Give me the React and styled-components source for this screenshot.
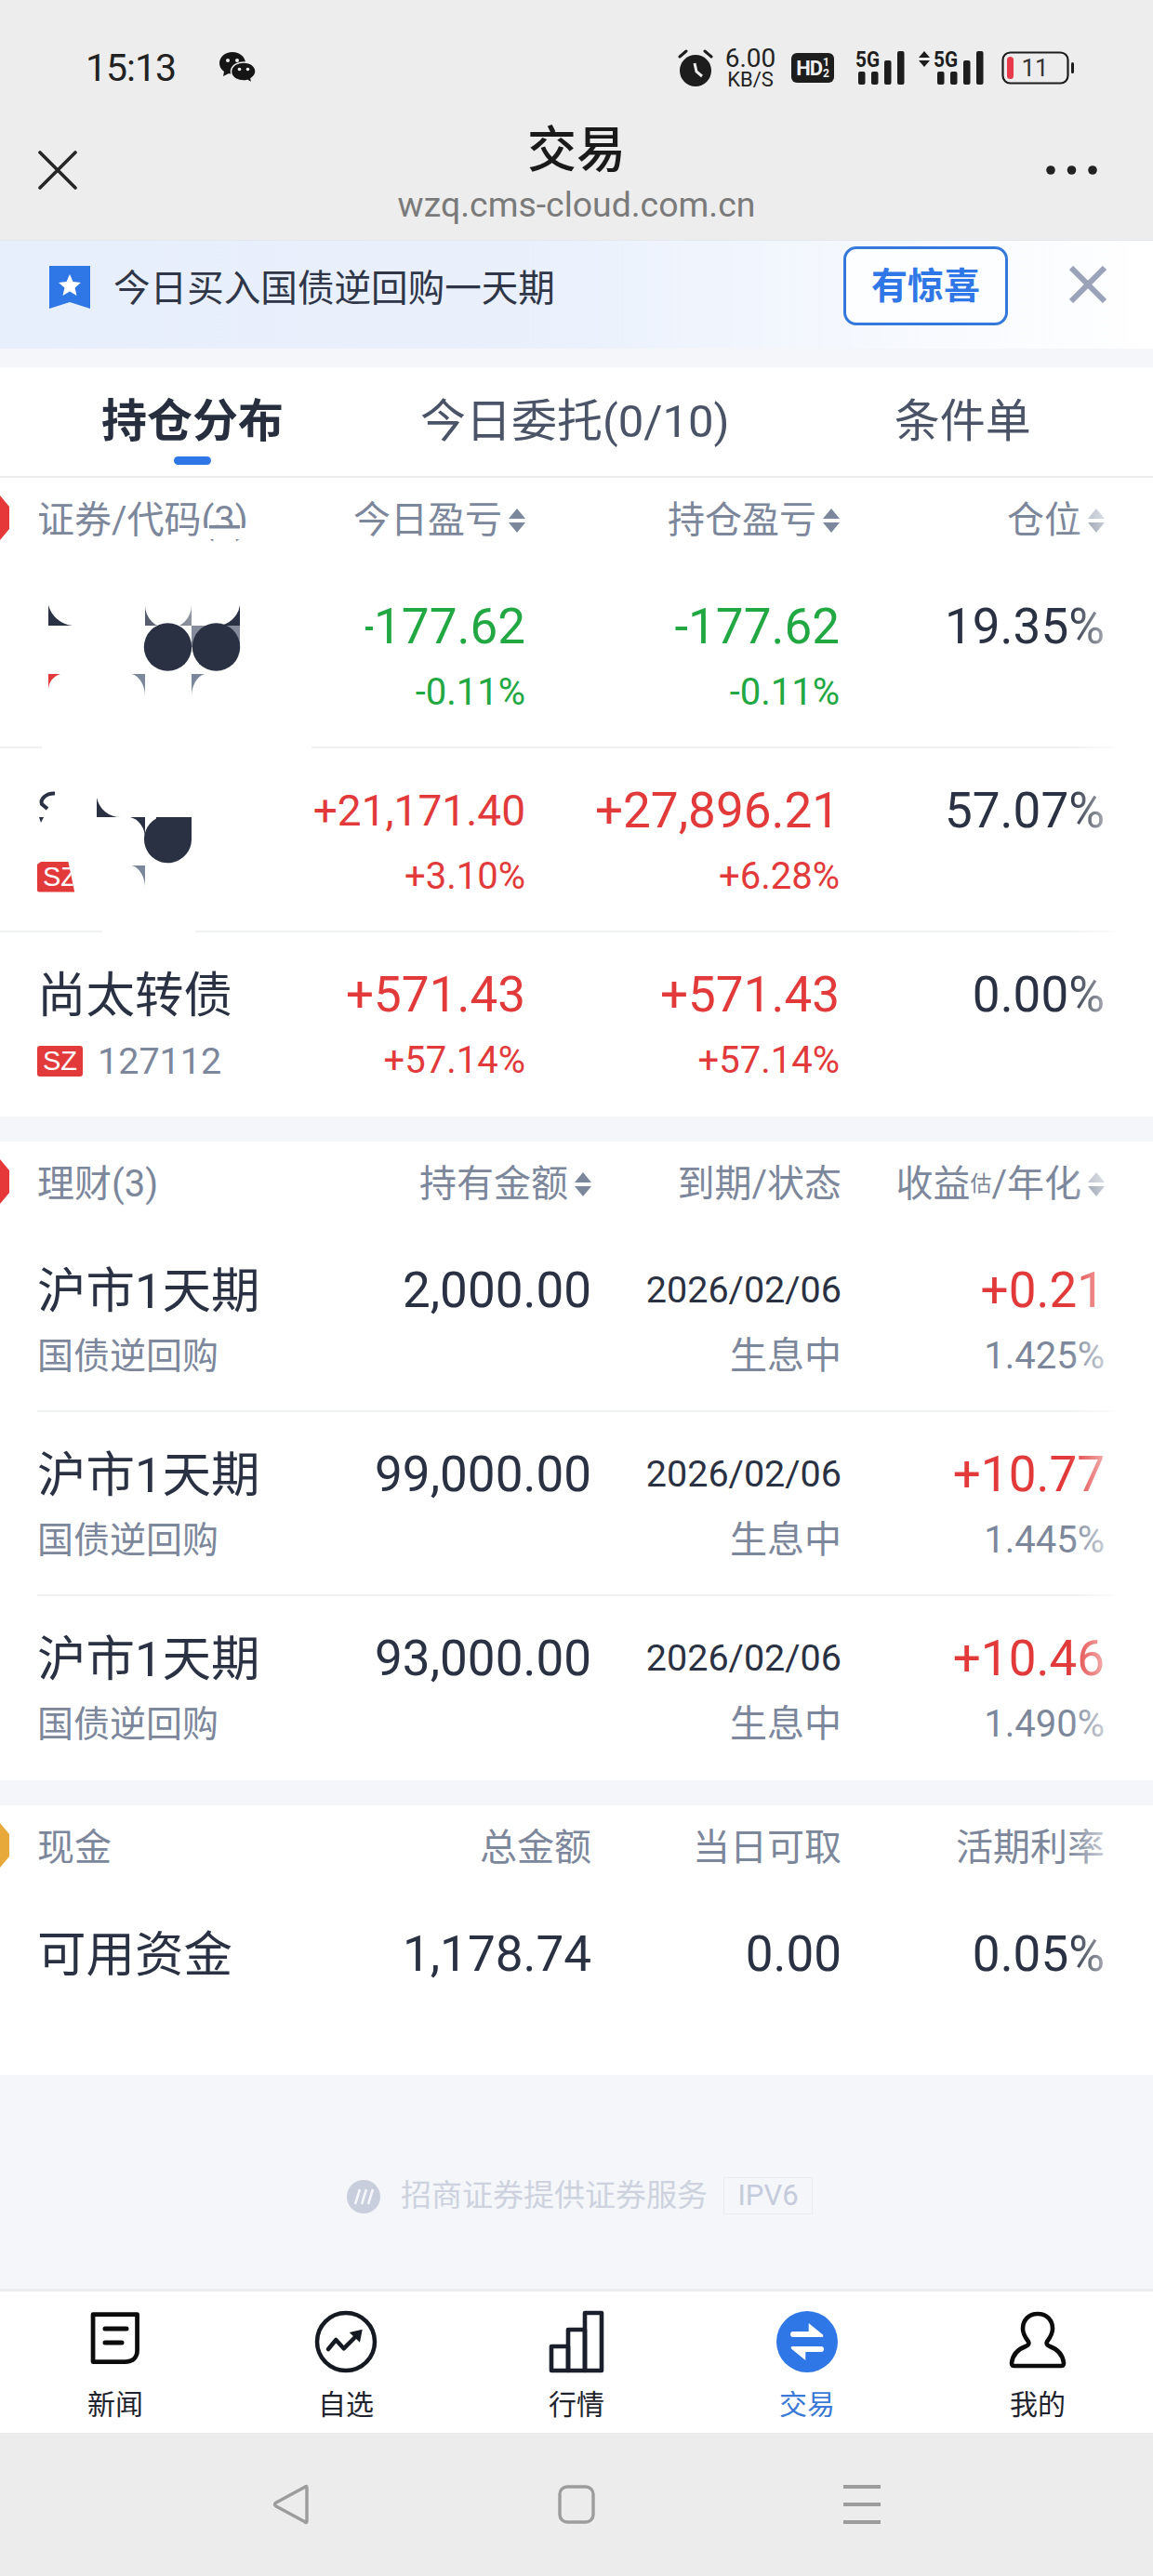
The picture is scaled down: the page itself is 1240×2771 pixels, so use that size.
import React from "react";
import styled, { createGlobalStyle } from "styled-components";

const Global = createGlobalStyle`
  html, body { margin: 0; padding: 0; background: #f4f6fa; }
  body { font-family: Roboto, "Noto Sans CJK SC", sans-serif; }
  * { box-sizing: border-box; }
`;

const INK = "#2a3142";
const MUTED = "#7c879b";
const RED = "#e23a3a";
const GREEN = "#22a843";
const BLUE = "#2f77e6";

const Page = styled.div`
  width: 1240px;
  height: 2771px;
  display: flex;
  flex-direction: column;
  overflow: hidden;
  background: #f4f6fa;
`;
const TopBar = styled.header`
  height: 258px;
  background: #ededed;
  flex: none;
`;
const StatusBar = styled.div`
  height: 98px;
  padding: 48px 85px 0 92px;
  display: flex;
  align-items: center;
  justify-content: space-between;
`;
const StatusLeft = styled.div`
  display: flex;
  align-items: center;
  gap: 46px;
`;
const Clock = styled.span`
  font-size: 41px;
  line-height: 50px;
  color: #222;
  letter-spacing: -1px;
`;
const StatusRight = styled.div`
  display: flex;
  align-items: center;
`;
const StatusIcon = styled.svg`
  display: block;
  flex: none;
  margin-left: ${(p) => p.$gap || 0}px;
`;
const NetSpeed = styled.div`
  width: 58px;
  margin-left: 11px;
  display: flex;
  flex-direction: column;
  align-items: center;
  color: #222;
`;
const SpeedValue = styled.span`
  font-size: 28px;
  line-height: 25px;
`;
const SpeedUnit = styled.span`
  font-size: 22px;
  line-height: 21px;
`;
const HdBadge = styled.div`
  width: 46px;
  height: 32px;
  margin-left: 15px;
  background: #1d1d1d;
  border-radius: 6px;
  color: #f0f0f0;
  display: flex;
  align-items: center;
  justify-content: center;
  font-size: 22px;
  font-weight: 700;
  letter-spacing: -1px;
`;
const HdFraction = styled.span`
  display: flex;
  flex-direction: column;
  font-size: 12px;
  line-height: 12px;
  margin-left: 1px;
  letter-spacing: 0;
`;
const NavHeader = styled.div`
  height: 160px;
  padding: 0 60px 0 41px;
  display: grid;
  grid-template-columns: 100px 1fr 81px;
  align-items: center;
`;
const TitleBlock = styled.div`
  display: flex;
  flex-direction: column;
  align-items: center;
  padding-top: 18px;
`;
const Title = styled.div`
  font-size: 53px;
  line-height: 60px;
  color: #1a1a1a;
  font-weight: 500;
`;
const Url = styled.div`
  font-size: 37.4px;
  line-height: 44px;
  margin-top: 6px;
  color: #7a7a7a;
`;
const HeaderIcon = styled.svg`
  display: block;
  margin-top: 10px;
  justify-self: ${(p) => (p.$end ? "end" : "start")};
`;
const Banner = styled.div`
  flex: none;
  height: 117px;
  padding: 6px 50px 25px 53px;
  display: flex;
  align-items: center;
  background: linear-gradient(to right, #e8effc 0%, #e9f0fc 45%, #ffffff 100%);
  border-top: 1px solid #e2e7f0;
`;
const BannerIcon = styled.svg`
  display: block;
  flex: none;
  margin-top: 3px;
`;
const BannerText = styled.div`
  margin: 6px 0 0 25px;
  flex: 1;
  font-size: 39.6px;
  line-height: 50px;
  color: #2f3648;
`;
const SurpriseButton = styled.button`
  width: 177px;
  height: 85px;
  margin-right: 66px;
  padding: 0 0 7px;
  font-family: inherit;
  border: 3px solid #3578dc;
  border-radius: 14px;
  background: #fdfeff;
  color: ${BLUE};
  font-size: 39px;
  font-weight: 700;
`;
const BannerClose = styled.svg`
  display: block;
  flex: none;
  margin-top: -3px;
`;
const Tabs = styled.nav`
  flex: none;
  margin-top: 20px;
  height: 119px;
  padding-left: 109px;
  background: #fff;
  border-bottom: 2px solid #ececee;
  display: flex;
  align-items: center;
`;
const Tab = styled.div`
  position: relative;
  margin-left: ${(p) => p.$gap || 0}px;
  font-size: 49px;
  line-height: 60px;
  font-weight: ${(p) => (p.$active ? 700 : 400)};
  color: ${(p) => (p.$active ? "#272e3e" : "#4b5366")};
  white-space: nowrap;
  ${(p) =>
    p.$active &&
    `&::after {
      content: "";
      position: absolute;
      left: 78px;
      top: calc(100% + 7px);
      width: 40px;
      height: 9px;
      border-radius: 5px;
      background: ${BLUE};
    }`}
`;
const Section = styled.section`
  position: relative;
  flex: none;
  background: #fff;
  margin-top: ${(p) => p.$gap || 0}px;
  &::after {
    content: "";
    position: absolute;
    top: 0;
    bottom: 0;
    right: 0;
    width: 90px;
    pointer-events: none;
    background: linear-gradient(to right, rgba(255, 255, 255, 0) 0, rgba(255, 255, 255, 0.7) 46px, #fff 52px);
  }
`;
const Marker = styled.i`
  position: absolute;
  left: 0;
  top: 19px;
  width: 10px;
  height: 48px;
  background: ${(p) => p.$color};
  clip-path: polygon(0 0, 100% 25%, 100% 75%, 0 100%);
`;
const HeaderRow = styled.div`
  height: 93px;
  padding: 0 52px 2px 40px;
  display: grid;
  grid-template-columns: ${(p) => p.$cols};
  align-items: center;
  font-size: 40px;
  line-height: 50px;
  color: ${MUTED};
`;
const HeadCell = styled.div`
  display: flex;
  align-items: center;
  justify-content: flex-end;
  white-space: nowrap;
`;
const HeadName = styled.div`
  white-space: nowrap;
`;
const Estimate = styled.sup`
  font-size: 23px;
  line-height: 1;
  vertical-align: 13px;
`;
const SortGlyph = styled.svg`
  display: block;
  margin-left: 7px;
  flex: none;
`;
const Row = styled.div`
  height: ${(p) => p.$height || 198}px;
  padding: 37px 52px 0 ${(p) => 40 - (p.$inset || 0)}px;
  margin-left: ${(p) => p.$inset || 0}px;
  display: grid;
  grid-template-columns: ${(p) => p.$cols};
  align-content: start;
  border-bottom: ${(p) => (p.$divider ? "2px solid #f0f1f3" : "none")};
`;
const Cell = styled.div`
  display: flex;
  flex-direction: column;
  align-items: ${(p) => (p.$left ? "flex-start" : "flex-end")};
  min-width: 0;
`;
const Main = styled.div`
  font-size: ${(p) => p.$size || 53}px;
  line-height: 60px;
  color: ${(p) => p.$color || INK};
  white-space: nowrap;
`;
const Name = styled.div`
  font-size: 52.5px;
  line-height: 60px;
  margin-top: 1px;
  color: ${INK};
  white-space: nowrap;
`;
const Sub = styled.div`
  margin-top: 21px;
  font-size: 40px;
  line-height: 40px;
  color: ${(p) => p.$color || MUTED};
  white-space: nowrap;
`;
const NameSub = styled(Sub)`
  margin-top: 20px;
  font-size: 39px;
`;
const Meta = styled.div`
  margin-top: 20px;
  height: 40px;
  display: flex;
  align-items: center;
  font-size: 39.5px;
  color: ${MUTED};
`;
const MarketBadge = styled.span`
  width: 49px;
  height: 33px;
  margin-right: 16px;
  border-radius: 3px;
  background: ${RED};
  color: #fff;
  font-family: "Liberation Sans", sans-serif;
  font-size: 29px;
  line-height: 33px;
  text-align: center;
  ${(p) => p.$masked && "clip-path: polygon(0 10%, 10% 0, 68% 0, 82% 100%, 0 100%);"}
`;
const Redaction = styled.svg`
  position: absolute;
  left: 0;
  top: 0;
  display: block;
`;
const Footer = styled.div`
  flex: 1;
  padding-top: 110px;
  padding-left: 372px;
  display: flex;
  align-items: flex-start;
`;
const FooterLogo = styled.svg`
  display: block;
  flex: none;
  margin-top: 3px;
`;
const FooterText = styled.span`
  margin-left: 21px;
  font-size: 33px;
  line-height: 40px;
  color: #cdd2de;
`;
const IpTag = styled.span`
  margin-left: 17px;
  width: 96px;
  height: 40px;
  border: 1px solid #e8ebf1;
  font-size: 31px;
  line-height: 38px;
  text-align: center;
  color: #c5cbdb;
`;
const BottomNav = styled.nav`
  flex: none;
  height: 155px;
  border-top: 3px solid #ebedf0;
  background: #fff;
  display: grid;
  grid-template-columns: repeat(5, 248px);
  padding-top: 20px;
`;
const NavItem = styled.div`
  display: flex;
  flex-direction: column;
  align-items: center;
`;
const NavIconBox = styled.svg`
  display: block;
  width: 68px;
  height: 68px;
`;
const NavLabel = styled.span`
  margin-top: 14px;
  font-size: 30px;
  line-height: 40px;
  color: ${(p) => (p.$active ? "#3a79d6" : "#1f232d")};
`;
const SystemNav = styled.div`
  flex: none;
  height: 154px;
  background: #ececec;
  display: flex;
  align-items: center;
  justify-content: center;
  gap: 267px;
`;
const SystemIcon = styled.svg`
  display: block;
  width: 40px;
  height: 44px;
`;

const Sort = ({ fade }) => (
  <SortGlyph width="18" height="26" viewBox="0 0 18 26">
    <path d="M9 0 L18 11 H0 Z" fill={fade ? "#a4acbb" : "#7c879b"} />
    <path d="M0 15 H18 L9 26 Z" fill="#7c879b" />
  </SortGlyph>
);

const Wechat = () => (
  <svg width="41" height="34" viewBox="0 0 41 34" style={{ display: "block" }}>
    <path d="M15 0 C7 0 1 5.5 1 12 C1 16 3 19 6 21 L5 26 L11 23 C12.5 23.4 14 23.6 15 23.6 C23 23.6 29 18 29 12 C29 5.5 23 0 15 0 Z" fill="#151515" />
    <circle cx="10" cy="9" r="2" fill="#ededed" />
    <circle cx="20" cy="9" r="2" fill="#ededed" />
    <path d="M27 11 C19 11 13.5 15.5 13.5 21 C13.5 26.5 19 31 27 31 C28.5 31 30 30.7 31 30.4 L36 33.5 L35 28.5 C38 26.5 40 24 40 21 C40 15.5 35 11 27 11 Z" fill="#151515" stroke="#ededed" strokeWidth="1.5" />
    <circle cx="22.5" cy="18.5" r="1.8" fill="#ededed" />
    <circle cx="31.5" cy="18.5" r="1.8" fill="#ededed" />
  </svg>
);

const Signal = ({ arrows }) => {
  const w = arrows ? 70 : 53;
  return (
    <StatusIcon $gap={arrows ? 15 : 23} width={w} height="56" viewBox={`0 -10 ${w} 56`}>
      {arrows && (
        <>
          <path d="M0 7 L6 0 L12 7 Z" fill="#1d1d1d" />
          <path d="M0 10 H12 L6 17 Z" fill="#1d1d1d" />
        </>
      )}
      <text x={arrows ? 16 : 0} y="17" fontSize="23" fontWeight="700" fontFamily="Roboto" fill="#1d1d1d" textLength="26" lengthAdjust="spacingAndGlyphs">5G</text>
      {[0, 14, 28, 42].map((x, i) => (
        <rect key={x} x={x + (arrows ? 20 : 3)} y={[22, 22, 10, 0][i]} width="7.5" height={[14, 14, 26, 36][i]} rx="2" fill="#1d1d1d" />
      ))}
    </StatusIcon>
  );
};

const cols1 = "1fr 240px 338px 285px";
const cols2 = "1fr 240px 269px 283px";

const stocks = [
  { today: "-177.62", todayPct: "-0.11%", hold: "-177.62", holdPct: "-0.11%", pos: "19.35%", color: GREEN },
  { today: "+21,171.40", todaySize: 46, todayPct: "+3.10%", hold: "+27,896.21", holdPct: "+6.28%", pos: "57.07%", color: RED, masked: true },
  { today: "+571.43", todayPct: "+57.14%", hold: "+571.43", holdPct: "+57.14%", pos: "0.00%", color: RED, name: "尚太转债", code: "127112" },
];
const wealth = [
  { amount: "2,000.00", gain: "+0.21", rate: "1.425%" },
  { amount: "99,000.00", gain: "+10.77", rate: "1.445%" },
  { amount: "93,000.00", gain: "+10.46", rate: "1.490%" },
];

const navItems = [
  {
    label: "新闻",
    icon: (
      <>
        <path d="M8 4 H62 V48 C62 57 56 62 47 62 H8 Z" transform="translate(3 1) scale(0.88)" fill="none" stroke="#0c0c0c" strokeWidth="5.4" strokeLinejoin="round" />
        <path d="M23 20 H46 M23 35 H41" stroke="#0c0c0c" strokeWidth="5" strokeLinecap="round" />
      </>
    ),
  },
  {
    label: "自选",
    icon: (
      <g transform="translate(34 34)">
        <circle r="31" fill="none" stroke="#151922" strokeWidth="4.5" />
        <path d="M-19 8 L-10.7 -2 L-2.3 7.3 L9 -4" fill="none" stroke="#151922" strokeWidth="4.5" strokeLinecap="round" strokeLinejoin="round" />
        <path d="M17.7 -13.3 L3.7 -10 L15 0.7 Z" fill="#151922" />
      </g>
    ),
  },
  {
    label: "行情",
    icon: (
      <g fill="none" stroke="#1a1f2b" strokeWidth="4.6" strokeLinejoin="round">
        <rect x="7" y="39" width="18" height="26" />
        <rect x="25" y="21" width="18" height="44" />
        <rect x="43" y="3" width="18" height="62" />
      </g>
    ),
  },
  {
    label: "交易",
    active: true,
    icon: (
      <g transform="translate(34 34)">
        <circle r="33" fill={BLUE} />
        <path d="M1.7 -20 L17 -7.5 Q18 -5 16 -5 L-15 -5 A3 3 0 0 1 -15 -11 L1.7 -11 Z" fill="#fff" />
        <path d="M1.7 -20 L17 -7.5 Q18 -5 16 -5 L-15 -5 A3 3 0 0 1 -15 -11 L1.7 -11 Z" transform="rotate(180)" fill="#fff" />
      </g>
    ),
  },
  {
    label: "我的",
    icon: (
      <path
        d="M34 4 C24 4 18 11 18 20 C18 26 21 30 24 34 C25 36 24 38 21 39 C13 42 7 48 6 57 C6 59 7 60 9 60 H59 C61 60 62 59 62 57 C61 48 55 42 47 39 C44 38 43 36 44 34 C47 30 50 26 50 20 C50 11 44 4 34 4 Z"
        fill="none"
        stroke="#0c0c0c"
        strokeWidth="4.6"
        strokeLinejoin="round"
      />
    ),
  },
];

export default function App() {
  return (
    <Page>
      <Global />
      <TopBar>
        <StatusBar>
          <StatusLeft>
            <Clock>15:13</Clock>
            <Wechat />
          </StatusLeft>
          <StatusRight>
            <StatusIcon width="38" height="40" viewBox="0 0 38 40">
              <circle cx="19" cy="23" r="17" fill="#1d1d1d" />
              <path d="M2 8 L9 2 M36 8 L29 2" stroke="#1d1d1d" strokeWidth="3" strokeLinecap="round" />
              <path d="M18 15 L20 24 L26 29" stroke="#ededed" strokeWidth="3" fill="none" />
            </StatusIcon>
            <NetSpeed>
              <SpeedValue>6.00</SpeedValue>
              <SpeedUnit>KB/S</SpeedUnit>
            </NetSpeed>
            <HdBadge>
              HD
              <HdFraction>
                <span>1</span>
                <span>2</span>
              </HdFraction>
            </HdBadge>
            <Signal />
            <Signal arrows />
            <StatusIcon $gap={19} width="78" height="36" viewBox="0 0 78 36">
              <rect x="1.5" y="1.5" width="70" height="33" rx="8" fill="none" stroke="#1d1d1d" strokeWidth="2.2" />
              <rect x="6" y="6" width="7" height="24" rx="3.5" fill="#e83a4a" />
              <rect x="75" y="12" width="3" height="12" rx="1.5" fill="#1d1d1d" />
              <text x="36" y="27" fontSize="26" fontFamily="Roboto" textAnchor="middle" fill="#333">11</text>
            </StatusIcon>
          </StatusRight>
        </StatusBar>
        <NavHeader>
          <HeaderIcon width="42" height="42" viewBox="0 0 42 42">
            <path d="M2 2 L40 40 M40 2 L2 40" stroke="#262626" strokeWidth="3.6" strokeLinecap="round" />
          </HeaderIcon>
          <TitleBlock>
            <Title>交易</Title>
            <Url>wzq.cms-cloud.com.cn</Url>
          </TitleBlock>
          <HeaderIcon $end width="55" height="10" viewBox="0 0 55 10">
            <circle cx="5" cy="5" r="4.8" fill="#222" />
            <circle cx="27.5" cy="5" r="4.8" fill="#222" />
            <circle cx="50" cy="5" r="4.8" fill="#222" />
          </HeaderIcon>
        </NavHeader>
      </TopBar>

      <Banner>
        <BannerIcon width="44" height="46" viewBox="0 0 44 46">
          <path d="M0 0 H44 V46 L22 39 L0 46 Z" fill={BLUE} />
          <path d="M22 9 L25.5 17 L34 18 L27.6 23.6 L29.5 32 L22 27.6 L14.5 32 L16.4 23.6 L10 18 L18.5 17 Z" fill="#fff" />
        </BannerIcon>
        <BannerText>今日买入国债逆回购一天期</BannerText>
        <SurpriseButton>有惊喜</SurpriseButton>
        <BannerClose width="40" height="40" viewBox="0 0 40 40">
          <path d="M2 2 L38 38 M38 2 L2 38" stroke="#9aa3b8" strokeWidth="6" />
        </BannerClose>
      </Banner>

      <Tabs>
        <Tab $active>持仓分布</Tab>
        <Tab $gap={147}>今日委托(0/10)</Tab>
        <Tab $gap={177}>条件单</Tab>
      </Tabs>

      <Section>
        <Marker $color="#e63838" />
        <HeaderRow $cols={cols1}>
          <HeadName>证券/代码(3)</HeadName>
          <HeadCell>今日盈亏<Sort /></HeadCell>
          <HeadCell>持仓盈亏<Sort /></HeadCell>
          <HeadCell>仓位<Sort fade /></HeadCell>
        </HeaderRow>
        {stocks.map((s, i) => (
          <Row key={s.pos} $cols={cols1} $divider={i < 2}>
            <Cell $left>
              <Name>{s.name || "\u00a0"}</Name>
              {i > 0 && (
                <Meta>
                  <MarketBadge $masked={s.masked}>SZ</MarketBadge>
                  {s.code}
                </Meta>
              )}
            </Cell>
            <Cell>
              <Main $color={s.color} $size={s.todaySize}>{s.today}</Main>
              <Sub $color={s.color}>{s.todayPct}</Sub>
            </Cell>
            <Cell>
              <Main $color={s.color}>{s.hold}</Main>
              <Sub $color={s.color}>{s.holdPct}</Sub>
            </Cell>
            <Cell>
              <Main>{s.pos}</Main>
            </Cell>
          </Row>
        ))}
        <Redaction width="420" height="687" viewBox="0 514 420 687">
          <defs>
            <linearGradient id="cellShade" x1="0" x2="1" y1="0" y2="0">
              <stop offset="0" stopColor="#555b6b" />
              <stop offset="1" stopColor="#8f94a0" />
            </linearGradient>
          </defs>
          <rect x="216" y="568" width="50" height="12" fill="#fff" />
          <rect x="225" y="565" width="33" height="3.5" fill="#7c879b" />
          <rect x="45" y="800" width="290" height="10" fill="#fff" />
          <rect x="110" y="998" width="100" height="10" fill="#fff" />
          <rect x="380" y="666" width="13" height="16" fill="#fff" />
          <rect x="401.5" y="666" width="4" height="16" fill="#fff" />

          <path d="M52 651 V673 H78 A30 30 0 0 1 52 651 Z" fill="#2a3142" />
          <path d="M156 651 V673 H206 V651 A25 25 0 0 1 156 651 Z" fill="url(#cellShade)" />
          <rect x="206" y="673" width="52" height="23" fill="#858b9a" />
          <path d="M258 651 V673 H235 A26 26 0 0 0 258 651 Z" fill="#2a3142" />
          <circle cx="180.5" cy="696" r="25.7" fill="#2a3142" />
          <circle cx="232.5" cy="696" r="25.7" fill="#2a3142" />
          <path d="M52 725 H65 A18 18 0 0 0 52 742 Z" fill="#e23a3a" />
          <path d="M156 725 H142 A18 25 0 0 1 156 750 Z" fill="#7c879b" />
          <path d="M206 725 H220 A18 25 0 0 0 206 750 Z" fill="#7c879b" />

          <path d="M59 853.5 C49 853 43 860 45 865 L51 870" fill="none" stroke="#2a3142" strokeWidth="4" />
          <path d="M42 879 H47 L44 885 Z" fill="#2a3142" />
          <path d="M104 858 V879 H130 A26 26 0 0 1 104 858 Z" fill="#2a3142" />
          <path d="M140 879 H156 V902 A20 23 0 0 0 140 879 Z" fill="#2a3142" />
          <path d="M206 879 V903 A25.5 25.5 0 1 1 168 880.5 V879 Z" fill="#2a3142" />
          <path d="M156 931 H142 A18 25 0 0 1 156 956 Z" fill="#7c879b" />
        </Redaction>
      </Section>

      <Section $gap={27}>
        <Marker $color="#e63838" />
        <HeaderRow $cols={cols2}>
          <HeadName>理财(3)</HeadName>
          <HeadCell>持有金额<Sort /></HeadCell>
          <HeadCell>到期/状态</HeadCell>
          <HeadCell>收益<Estimate>估</Estimate>/年化<Sort fade /></HeadCell>
        </HeaderRow>
        {wealth.map((w, i) => (
          <Row key={w.amount} $cols={cols2} $inset={40} $divider={i < 2}>
            <Cell $left>
              <Name>沪市1天期</Name>
              <NameSub>国债逆回购</NameSub>
            </Cell>
            <Cell>
              <Main>{w.amount}</Main>
            </Cell>
            <Cell>
              <Main $size={39.5}>2026/02/06</Main>
              <Sub>生息中</Sub>
            </Cell>
            <Cell>
              <Main $color={RED}>{w.gain}</Main>
              <Sub>{w.rate}</Sub>
            </Cell>
          </Row>
        ))}
      </Section>

      <Section $gap={27}>
        <Marker $color="#e6a93a" />
        <HeaderRow $cols={cols2}>
          <HeadName>现金</HeadName>
          <HeadCell>总金额</HeadCell>
          <HeadCell>当日可取</HeadCell>
          <HeadCell>活期利率</HeadCell>
        </HeaderRow>
        <Row $cols={cols2} $height={197}>
          <Cell $left>
            <Name>可用资金</Name>
          </Cell>
          <Cell>
            <Main>1,178.74</Main>
          </Cell>
          <Cell>
            <Main>0.00</Main>
          </Cell>
          <Cell>
            <Main>0.05%</Main>
          </Cell>
        </Row>
      </Section>

      <Footer>
        <FooterLogo width="38" height="36" viewBox="0 0 38 36">
          <circle cx="19" cy="18" r="18" fill="#c8cedc" />
          <path d="M10 26 L15 10 M17 26 L22 10 M24 26 L29 10" stroke="#f4f6fa" strokeWidth="2.6" />
        </FooterLogo>
        <FooterText>招商证券提供证券服务</FooterText>
        <IpTag>IPV6</IpTag>
      </Footer>

      <BottomNav>
        {navItems.map((item) => (
          <NavItem key={item.label}>
            <NavIconBox viewBox="0 0 68 68">{item.icon}</NavIconBox>
            <NavLabel $active={item.active}>{item.label}</NavLabel>
          </NavItem>
        ))}
      </BottomNav>

      <SystemNav>
        <SystemIcon viewBox="0 0 40 44">
          <path d="M37 4 L37 40 Q37 43 34.5 40.5 L4 24 Q1 22 4 20 L34.5 3.5 Q37 1 37 4 Z" fill="none" stroke="#9c9c9c" strokeWidth="3.4" strokeLinejoin="round" />
        </SystemIcon>
        <SystemIcon viewBox="0 0 40 44">
          <rect x="2" y="3" width="36" height="38" rx="8" fill="none" stroke="#9c9c9c" strokeWidth="3.4" />
        </SystemIcon>
        <SystemIcon viewBox="0 0 40 44">
          <path d="M0 3 H40 M0 22 H40 M0 41 H40" stroke="#9c9c9c" strokeWidth="4" />
        </SystemIcon>
      </SystemNav>
    </Page>
  );
}
